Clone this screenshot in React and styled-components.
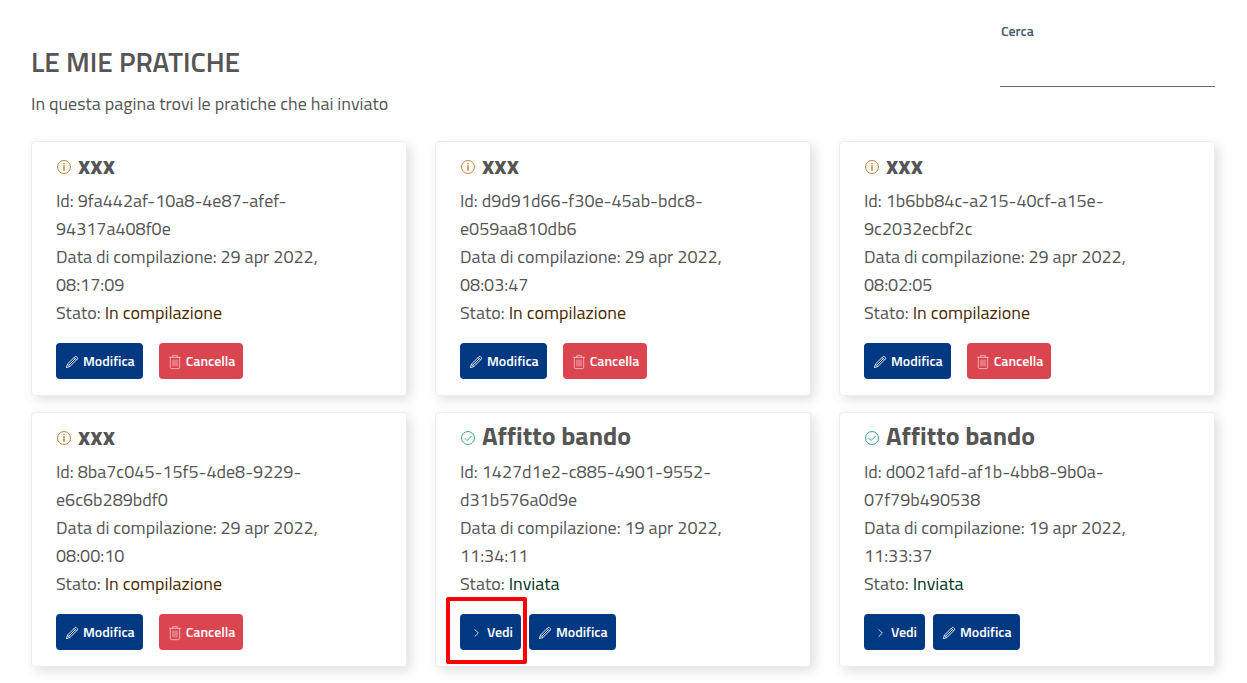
import React, { useState } from "react";
import styled, { createGlobalStyle } from "styled-components";

const pratiche = [
  { id: "9fa442af-10a8-4e87-afef-94317a408f0e", title: "xxx", date: "29 apr 2022, 08:17:09", sent: false },
  { id: "d9d91d66-f30e-45ab-bdc8-e059aa810db6", title: "xxx", date: "29 apr 2022, 08:03:47", sent: false },
  { id: "1b6bb84c-a215-40cf-a15e-9c2032ecbf2c", title: "xxx", date: "29 apr 2022, 08:02:05", sent: false },
  { id: "8ba7c045-15f5-4de8-9229-e6c6b289bdf0", title: "xxx", date: "29 apr 2022, 08:00:10", sent: false },
  { id: "1427d1e2-c885-4901-9552-d31b576a0d9e", title: "Affitto bando", date: "19 apr 2022, 11:34:11", sent: true, highlighted: true },
  { id: "d0021afd-af1b-4bb8-9b0a-07f79b490538", title: "Affitto bando", date: "19 apr 2022, 11:33:37", sent: true },
];

const InfoIcon = () => (
  <svg width="16" height="16" viewBox="0 0 24 24" fill="none" stroke="#bd8238" strokeWidth="1.5" aria-hidden="true">
    <circle cx="12" cy="12" r="9.7" />
    <path d="M12 9.5v8M12 6v2" strokeWidth="2.2" />
  </svg>
);

const CheckIcon = () => (
  <svg width="16" height="16" viewBox="0 0 24 24" fill="none" stroke="#3fa57c" strokeWidth="1.5" aria-hidden="true">
    <circle cx="12" cy="12" r="9.7" />
    <path d="M7 12.2l3.6 3.6 6.9-6.9" />
  </svg>
);

const PencilIcon = () => (
  <svg width="16" height="16" viewBox="0 0 24 24" fill="none" stroke="#fff" strokeWidth="1.3" aria-hidden="true">
    <path d="M3.6 20.4l1.6-5.2L16.4 4a1.6 1.6 0 0 1 2.3 0l1.3 1.3a1.6 1.6 0 0 1 0 2.3L8.8 18.8z" />
    <path d="M5.2 15.2l3.6 3.6M15.2 5.2l3.6 3.6M7 17L17 7" />
  </svg>
);

const TrashIcon = () => (
  <svg width="16" height="16" viewBox="0 0 24 24" fill="none" stroke="#fff" strokeOpacity="0.65" strokeWidth="1.3" aria-hidden="true">
    <path d="M3 5h18M8.5 5V2.5h7V5M5 5v15a2 2 0 0 0 2 2h10a2 2 0 0 0 2-2V5" />
    <path d="M9 8.5v10M12 8.5v10M15 8.5v10" />
  </svg>
);

const ChevronIcon = () => (
  <svg width="16" height="16" viewBox="0 0 24 24" fill="none" stroke="#fff" strokeWidth="1.2" aria-hidden="true">
    <path d="M10 6.5l5.5 5.5-5.5 5.5" />
  </svg>
);

function PraticaCard({ pratica }) {
  return (
    <Card>
      <CardTitle>
        {pratica.sent ? <CheckIcon /> : <InfoIcon />}
        {pratica.title}
      </CardTitle>
      <Details>
        <p>{`Id: ${pratica.id}`}</p>
        <p>{`Data di compilazione: ${pratica.date}`}</p>
        <p>
          Stato: <Status $sent={pratica.sent}>{pratica.sent ? "Inviata" : "In compilazione"}</Status>
        </p>
      </Details>
      <Actions $compact={pratica.sent}>
        {pratica.sent && (
          <ViewSlot $highlighted={pratica.highlighted}>
            <Button type="button">
              <ChevronIcon />
              Vedi
            </Button>
          </ViewSlot>
        )}
        <Button type="button">
          <PencilIcon />
          Modifica
        </Button>
        {!pratica.sent && (
          <Button type="button" $danger>
            <TrashIcon />
            Cancella
          </Button>
        )}
      </Actions>
    </Card>
  );
}

function App() {
  const [search, setSearch] = useState("");
  const visible = pratiche.filter((p) =>
    `${p.title} ${p.id}`.toLowerCase().includes(search.toLowerCase())
  );

  return (
    <Page>
      <GlobalStyle />
      <Header>
        <div>
          <Title>LE MIE PRATICHE</Title>
          <Subtitle>In questa pagina trovi le pratiche che hai inviato</Subtitle>
        </div>
        <Search>
          <label htmlFor="cerca">Cerca</label>
          <input id="cerca" type="text" value={search} onChange={(e) => setSearch(e.target.value)} />
        </Search>
      </Header>
      <Grid>
        {visible.map((p) => (
          <PraticaCard key={p.id} pratica={p} />
        ))}
      </Grid>
    </Page>
  );
}

export default App;

const GlobalStyle = createGlobalStyle`
  * {
    box-sizing: border-box;
  }
  body {
    margin: 0;
    background: #fff;
    color: #555;
    font-family: "Titillium Web", Roboto, sans-serif;
    font-size: 18px;
    line-height: 28px;
  }
  h1, h2, p {
    margin: 0;
  }
`;

const Page = styled.main`
  padding: 20px 32px 16px 31px;
`;

const Header = styled.header`
  display: flex;
  justify-content: space-between;
  align-items: flex-start;
  margin-bottom: 23px;
`;

const Title = styled.h1`
  margin-top: 24px;
  font-size: 28px;
  font-weight: 600;
  line-height: 36px;
`;

const Subtitle = styled.p`
  margin-top: 10px;
`;

const Search = styled.div`
  display: flex;
  flex-direction: column;
  width: 215px;
  label {
    padding-left: 1px;
    color: #435a70;
    font-size: 14px;
    font-weight: 600;
    line-height: 22px;
  }
  input {
    width: 100%;
    height: 45px;
    padding: 0 8px;
    border: 0;
    border-bottom: 1px solid #5c6f82;
    background: transparent;
    color: inherit;
    font: inherit;
    outline: none;
  }
`;

const Grid = styled.section`
  display: grid;
  grid-template-columns: repeat(3, 1fr);
  gap: 16px 28px;
`;

const Card = styled.article`
  padding: 9px 24px 16px;
  border: 1px solid #ebedef;
  border-radius: 4px;
  background: #fff;
  box-shadow: 4px 4px 12px rgba(0, 0, 0, 0.12);
`;

const CardTitle = styled.h2`
  display: flex;
  align-items: center;
  gap: 6px;
  margin-bottom: 8px;
  font-size: 26px;
  font-weight: 700;
  line-height: 28px;
  svg {
    margin-top: 4px;
  }
`;

const Details = styled.div`
  padding-right: 24px;
`;

const Status = styled.span`
  color: ${({ $sent }) => ($sent ? "#00331f" : "#4a2a00")};
`;

const Actions = styled.div`
  display: flex;
  gap: ${({ $compact }) => ($compact ? "8px" : "16px")};
  margin-top: 16px;
`;

const ViewSlot = styled.div`
  position: relative;
  &::after {
    content: ${({ $highlighted }) => ($highlighted ? '""' : "none")};
    position: absolute;
    inset: -17px -6px -14px -14px;
    border: 4px solid #f00;
    border-radius: 2px;
    pointer-events: none;
  }
`;

const Button = styled.button`
  display: flex;
  align-items: center;
  gap: 3px;
  height: 36px;
  padding: 0 8px 2px;
  border: 0;
  border-radius: 4px;
  background: ${({ $danger }) => ($danger ? "#db4550" : "#003882")};
  color: #fff;
  font-family: inherit;
  font-size: 14px;
  font-weight: 600;
  cursor: pointer;
  svg {
    margin-top: 4px;
  }
`;
